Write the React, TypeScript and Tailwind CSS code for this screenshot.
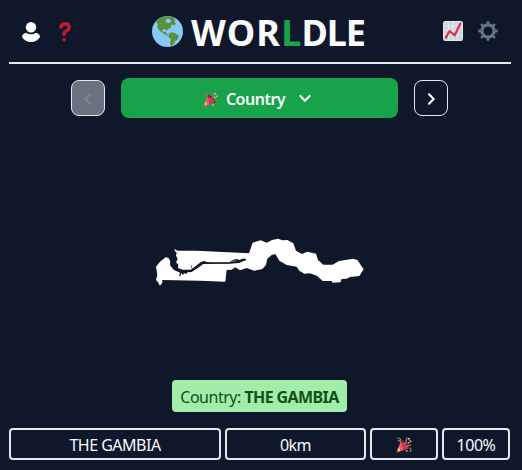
import React from "react";

function Globe() {
  return (
    <svg viewBox="0 0 36 36" className="h-[31px] w-[31px] shrink-0">
      <circle cx="18" cy="18" r="18" fill="#88c9f9" />
      <path fill="#5c913b" d="M4 7Q9 2 15 .6Q20 0 24 1.5L27 4L26 7L28 9L26 11L23 10L22 13L19 15L17 17L15 15L12 16L13 19L16 18L17 21L20 22L18 23L14 21L10 18L7 15L6 12L7 9Z" />
      <path fill="#5c913b" d="M20 20L23 19L27 20L31 23L30 27L27 29L25 33L22 35L21 31L22 27L19 24Z" />
      <path fill="#88c9f9" d="M16 4L19 3L22 5L22 7L19 8L16 7Z" />
    </svg>
  );
}

function Popper({ className }: { className: string }) {
  return (
    <svg viewBox="0 0 36 36" className={className}>
      <path fill="#ea596e" d="M11.6 7.6L1 34.2Q1 36 3 35L29 25Q26 14 11.6 7.6Z" />
      <path fill="#dd2e44" d="M12 10L16 29L29 25Q25 13 12 10Z" />
      <path fill="#a0041e" d="M12 7Q22 8 29 20Q31 28 26 25Q16 21 11 10Z" />
      <path fill="#dd2e44" d="M12 10Q21 12 27 24L18 27Z" />
      <path fill="#ffcc4d" d="M7 22L9 30L7 33L4 29Z" />
      <path fill="none" stroke="#9266cc" strokeWidth="3" d="M18 17Q25 15 22 9Q25 6 25 1M4 7Q8 11 10 6" />
      <path fill="none" stroke="#5c913b" strokeWidth="3" d="M3 3Q12 1 10 10Q9 14 13 15M22 23Q26 17 34 19M31 24L34 28L31 34" />
      <g fill="#ffcc4d"><circle cx="29" cy="4" r="2.2" /><circle cx="33" cy="10" r="2" /><circle cx="28" cy="13" r="2" /><circle cx="24" cy="31" r="2" /></g>
      <circle cx="31" cy="8" r="2" fill="#9266cc" />
    </svg>
  );
}

function Chart() {
  return (
    <svg viewBox="0 0 36 36" className="h-5 w-5">
      <rect width="36" height="36" rx="4" fill="#e1e8ed" />
      <rect x="2" y="2" width="32" height="32" rx="2" fill="#ccd6dd" />
      <path stroke="#e1e8ed" strokeWidth="2" d="M2 9H34M2 17H34M2 25H34M10 2V34M18 2V34M26 2V34" />
      <path fill="none" stroke="#dd2e44" strokeWidth="4" strokeLinecap="round" strokeLinejoin="round" d="M5 30L12 18L21 26L31 5" />
    </svg>
  );
}

function Gear() {
  return (
    <svg viewBox="0 0 36 36" className="h-5 w-5">
      <g stroke="#66757f" strokeWidth="5" strokeLinecap="round">
        <path d="M18 2.5V7M18 29V33.5M2.5 18H7M29 18H33.5M7 7L10 10M26 26L29 29M7 29L10 26M26 10L29 7" />
        <circle cx="18" cy="18" r="11" fill="none" strokeWidth="5.6" />
      </g>
    </svg>
  );
}

function Chevron({ d, className }: { d: string; className: string }) {
  return (
    <svg viewBox="0 0 24 24" fill="none" stroke="currentColor" strokeWidth="3.2" strokeLinecap="round" strokeLinejoin="round" className={className}>
      <path d={d} />
    </svg>
  );
}

function CountryShape() {
  return (
    <svg viewBox="0 0 660 195" className="ml-[150px] h-[65px] w-[220px]">
      <path fill="white" d="M75 58L83 62L140 62L297 70L308 38L332 31L350 38L366 30L384 26L397 31L412 30L430 40L438 62L456 72L472 65L498 71L504 90L520 104L548 104L567 93L610 86L622 90L641 118L628 138L600 141L590 146L575 147L571 157L548 158L545 153L518 153L502 138L480 130L463 131L448 122L440 110L410 105L388 92L376 72L365 75L352 86L348 105L337 117L312 122L290 114L270 121L256 112L245 119L230 120L226 155L150 152L37 150L37 158L30 167L23 155L18 150L22 135L18 110L30 95L47 82L55 83L61 94L60 105L66 113L72 120L90 128L87 138L91 138L94 129L99 136L102 129L110 132L112 127L125 126L142 115L160 102L180 101L240 101L265 99L290 90L280 86L240 98L178 98L161 93L152 97L142 104L132 112L122 119L98 119L84 114L85 104L78 97L83 87L78 77L80 68L73 61Z" />
      <path fill="none" stroke="#0f172a" strokeWidth="4" strokeLinejoin="round" d="M62 85L63 92L67 108L73 117L96 122L125 121L144 108L160 98L178 99L240 98L254 90L264 90L269 96L277 88L288 88" />
      <path fill="none" stroke="#0f172a" strokeWidth="2" d="M124 114L125 106M267 90L263 97" />
    </svg>
  );
}

const cell = "flex h-8 items-center justify-center rounded border-2 border-gray-200 pt-0.5";

export default function App() {
  return (
    <main className="h-[470px] w-[522px] overflow-hidden bg-slate-900 pl-[9px] pr-3 font-['Noto_Sans','Open_Sans',sans-serif] text-base text-gray-50">
      <header className="flex h-16 w-[502px] items-center border-b-2 border-gray-200">
        <div className="flex w-[143px] shrink-0 items-center pl-[13px] pt-0.5">
          <svg viewBox="0 0 18 20" className="h-5 w-[18px]" fill="white">
            <circle cx="9" cy="5.2" r="5.2" />
            <path d="M4 10.7Q9 13.7 14 10.7Q18 12 18 15Q15 20 9 20Q3 20 0 15Q0 12 4 10.7Z" />
          </svg>
          <svg viewBox="0 0 12 20" className="ml-[19px] h-5 w-3" fill="none" stroke="#be1931" strokeWidth="3.6" strokeLinecap="round">
            <path d="M1.9 4.9Q2.6 1.9 6.2 1.9Q10.2 1.9 10.1 5.5Q10 7.8 7.6 8.9Q5.1 10 5.1 12.4" />
            <circle cx="5.1" cy="17.8" r="1.8" fill="#be1931" stroke="none" />
          </svg>
        </div>
        <Globe />
        <h1 className="ml-2 w-[234px] shrink-0 whitespace-nowrap pt-1 text-4xl font-bold">
          <span className="tracking-[1.2px]">WOR</span><span className="tracking-[0.1px] text-[#18a34b]">L</span><span className="tracking-[-1px]">DLE</span>
        </h1>
        <div className="ml-[18px] flex gap-[15px]"><Chart /><Gear /></div>
      </header>
      <nav className="mt-[14px] flex h-10 w-[502px] items-center gap-4 pl-[62px]">
        <button disabled className="flex h-9 w-[34px] items-center justify-center rounded-lg border border-gray-200 bg-[#6b7280] text-[#858585]">
          <Chevron d="M15 5L8 12L15 19" className="mt-0.5 h-4 w-4" />
        </button>
        <button className="flex h-10 w-[277px] items-center justify-center rounded-lg bg-[#18a34b] pr-[3px] font-semibold">
          <Popper className="mt-0.5 h-[15px] w-[15px]" />
          <span className="ml-2 mt-0.5 tracking-[-0.5px]">Country</span>
          <Chevron d="M5 9L12 16L19 9" className="ml-3 h-4 w-4" />
        </button>
        <button className="flex h-9 w-[34px] items-center justify-center rounded-lg border border-gray-200">
          <Chevron d="M9 5L16 12L9 19" className="mt-0.5 h-4 w-4" />
        </button>
      </nav>
      <section className="-ml-[9px] mt-28 h-[150px]"><CountryShape /></section>
      <div className="ml-[163px] flex h-8 w-[175px] items-center justify-center whitespace-nowrap rounded bg-[#a1eda9] pt-0.5 text-[#0f5118]">
        <span className="tracking-[-0.5px]">Country:&nbsp;</span>
        <b className="tracking-[-0.6px]">THE GAMBIA</b>
      </div>
      <div className="mt-4 flex gap-1">
        <div className={`${cell} w-[212px] tracking-[-0.5px]`}>THE GAMBIA</div>
        <div className={`${cell} w-[141px] tracking-[-0.5px]`}>0km</div>
        <div className={`${cell} w-[68px]`}><Popper className="h-4 w-4" /></div>
        <div className={`${cell} w-[68px] tracking-[-0.5px]`}>100%</div>
      </div>
    </main>
  );
}
